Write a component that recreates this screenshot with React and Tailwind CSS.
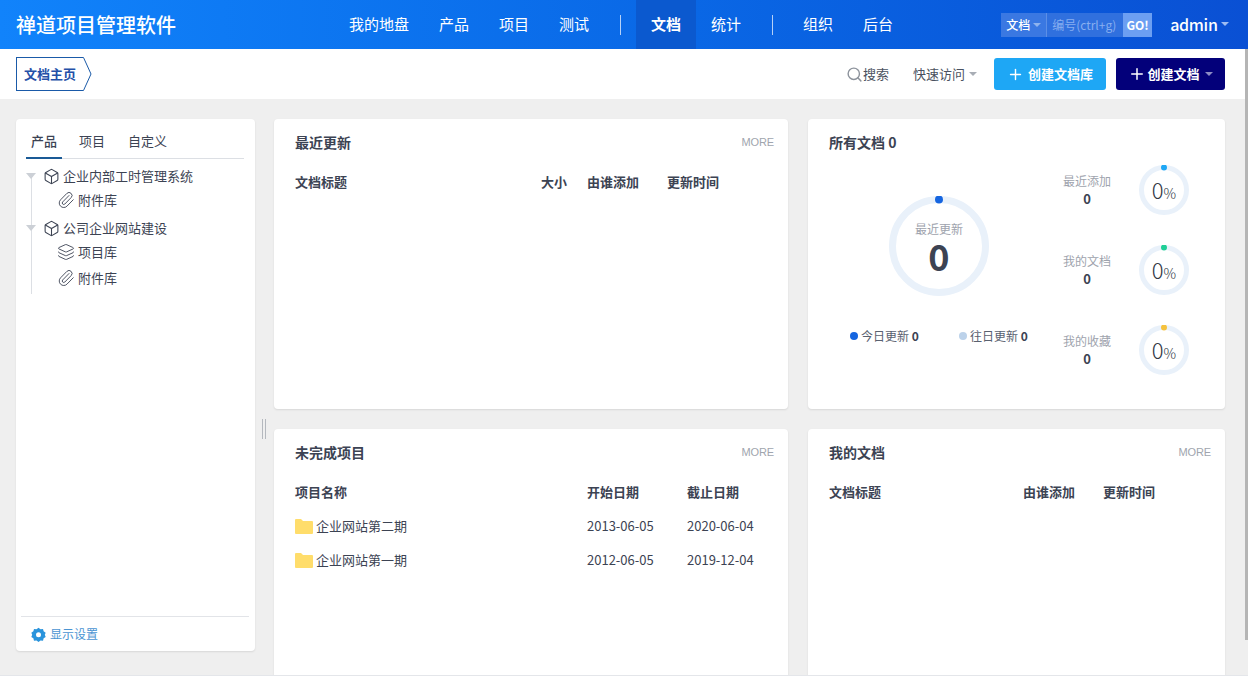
import React from "react";
import { Box, Layers, Paperclip, Plus, Search } from "lucide-react";

const navItems = ["我的地盘", "产品", "项目", "测试", "|", "文档", "统计", "|", "组织", "后台"];

const Caret = ({ className }) => (
  <span className={`inline-block w-0 h-0 border-x-[4px] border-x-transparent border-t-[4px] ${className}`} />
);

const Card = ({ title, more, children, className }) => (
  <div className={`bg-white rounded-[4px] shadow-[0_1px_2px_rgba(0,0,0,0.1)] px-[21px] ${className}`}>
    <div className="flex items-center justify-between h-[46px] -mr-[7px]">
      <span className="text-[14px] font-bold text-[#3c4353]">{title}</span>
      {more && <span className="text-[11px] text-[#a0a5ae] tracking-[-0.1px] font-['Liberation_Sans',sans-serif]">MORE</span>}
    </div>
    {children}
  </div>
);

const HeadRow = ({ cols }) => (
  <div className="flex items-center h-[30px] mt-[2px]">
    {cols.map(([text, w]) => (
      <div key={text} className="text-[13px] font-bold text-[#3c4353]" style={{ width: w }}>
        {text}
      </div>
    ))}
  </div>
);

const Folder = () => (
  <svg width="18" height="15" viewBox="0 0 18 15" className="shrink-0">
    <path d="M1 0h5l2 2h9a1 1 0 0 1 1 1v11a1 1 0 0 1-1 1H1a1 1 0 0 1-1-1V1a1 1 0 0 1 1-1z" fill="#ffdd6b" />
  </svg>
);

const Ring = ({ size, width, dot, dotR, children }) => {
  const r = size / 2 - width / 2;
  return (
    <div className="relative shrink-0" style={{ width: size, height: size }}>
      <svg width={size} height={size} viewBox={`0 0 ${size} ${size}`}>
        <circle cx={size / 2} cy={size / 2} r={r} fill="none" stroke="#e9f1fa" strokeWidth={width} />
        <circle cx={size / 2} cy={width / 2} r={dotR} fill={dot} />
      </svg>
      <div className="absolute inset-0 flex flex-col items-center justify-center">{children}</div>
    </div>
  );
};

const SmallStat = ({ label, dot }) => (
  <div className="flex items-center h-[80px]">
    <div className="w-[76px] flex flex-col items-center">
      <span className="text-[12px] leading-[18px] text-[#9ea3ad]">{label}</span>
      <span className="text-[13px] leading-[18px] font-bold text-[#3c4353]">0</span>
    </div>
    <div className="ml-[14px]">
      <Ring size={50} width={5} dot={dot} dotR={3}>
        <span className="text-[#2f3644] leading-none font-light -mt-[3px]">
          <span className="text-[22px]">0</span>
          <span className="text-[14px]">%</span>
        </span>
      </Ring>
    </div>
  </div>
);

const Gear = () => (
  <svg width="15" height="15" viewBox="0 0 24 24" fill="none" className="shrink-0">
    <path
      d="M12 1l3.200 2.400 4-.3 1 3.800 3.300 2.300-1.400 3.300 1.400 3.300-3.300 2.200-1 3.800-4-.3L12 24l-3.200-2.500-4 .3-1-3.800L.5 15.800l1.400-3.300L.5 9.200l3.300-2.300 1-3.800 4 .3z"
      fill="#2a94dc"
    />
    <circle cx="12" cy="12.500" r="4" fill="white" />
  </svg>
);

const TreeItem = ({ icon: Icon, text, className = "" }) => (
  <div className={`flex items-center h-[26px] pl-[31px] text-[13px] text-[#3c4353] ${className}`}>
    <Icon size={18} strokeWidth={1.2} className="mr-[3px] text-[#3c4353]" />
    {text}
  </div>
);

const TreeHead = ({ text, className = "" }) => (
  <div className={`flex items-center h-[26px] text-[13px] text-[#3c4353] ${className}`}>
    <Caret className="border-x-[5px] border-t-[6px] border-t-[#ccd0d6] mr-[7px]" />
    <Box size={17} strokeWidth={1.5} className="mr-[3px]" />
    {text}
  </div>
);

export default function App() {
  return (
    <div className="relative w-[1248px] h-[682px] overflow-hidden bg-[#efefef] font-['Noto_Sans_CJK_SC','Noto_Sans',sans-serif]">
      <header className="flex items-center h-[49px] bg-gradient-to-r from-[#1183fb] to-[#0a50d4] text-white">
        <div className="w-[334px] pl-[16px] text-[20px] font-medium">禅道项目管理软件</div>
        <nav className="flex h-full">
          {navItems.map((item, i) =>
            item === "|" ? (
              <div key={i} className="w-[32px] flex items-center justify-center">
                <div className="w-px h-[20px] bg-white/70" />
              </div>
            ) : (
              <div
                key={i}
                className={`flex items-center px-[15px] text-[15px] ${item === "文档" ? "bg-[#0b59cf] font-bold" : ""}`}
              >
                {item}
              </div>
            )
          )}
        </nav>
        <div className="ml-[93px] flex h-[24px] text-[12px] leading-[24px]">
          <div className="flex items-center w-[46px] pl-[5px] gap-[3px] bg-[#3a78e2] border-r border-r-[#5c8fe6] font-medium">
            文档
            <Caret className="border-t-[#8fb3ee]" />
          </div>
          <div className="w-[76px] pl-[5px] bg-[#3070de] text-[#87aef0]">编号(ctrl+g)</div>
          <div className="w-[29px] text-center bg-[#6c9ff2] font-bold">GO!</div>
        </div>
        <div className="ml-[18px] -mt-px flex items-center gap-[3px] text-[16px] font-medium tracking-[-0.3px]">
          admin
          <Caret className="border-t-[#9dbcf2]" />
        </div>
      </header>

      <div className="flex items-center h-[50px] bg-white pl-[16px] pr-[23px]">
        <div className="relative flex items-center h-[34px] w-[67px] pl-[7px] border border-r-0 border-[#1a5aa8] text-[13px] font-bold text-[#2450a8]">
          文档主页
          <svg width="9" height="34" viewBox="0 0 9 34" className="absolute left-[66px] -top-px">
            <path d="M0 .5h.5L8 17 .5 33.500H0" fill="white" stroke="#1a5aa8" />
          </svg>
        </div>
        <div className="ml-auto flex items-center text-[13px] text-[#4a5160]">
          <Search size={17} strokeWidth={2} className="text-[#8d939c]" />
          搜索
          <span className="ml-[24px]">快速访问</span>
          <Caret className="ml-[4px] border-t-[#a8adb5]" />
          <button className="ml-[17px] flex items-center justify-center w-[112px] h-[32px] rounded-[3px] bg-[#1ea7f5] text-white text-[13px] font-bold">
            <Plus size={17} strokeWidth={2} className="mr-[4px]" />
            创建文档库
          </button>
          <button className="ml-[10px] flex items-center justify-center w-[109px] h-[32px] rounded-[3px] bg-[#03007a] text-white text-[13px] font-bold">
            <Plus size={18} strokeWidth={2} className="mr-px" />
            创建文档
            <Caret className="ml-[5px] border-t-[#8d8cc4]" />
          </button>
        </div>
      </div>

      <main className="flex h-[576px] overflow-hidden pt-[20px] pl-[16px]">
        <aside className="flex flex-col w-[239px] h-[532px] bg-white rounded-[4px] shadow-[0_1px_2px_rgba(0,0,0,0.1)] pl-[10px] pr-[11px]">
          <div className="flex h-[40px] pt-[8px] border-b border-b-[#dcdfe4] text-[13px] text-[#3c4353]">
            <div className="flex justify-center items-center w-[36px] h-[32px] pb-[2px] border-b-2 border-b-[#1a5a96] font-medium">产品</div>
            <div className="ml-[17px] h-[28px] flex items-center">项目</div>
            <div className="ml-[23px] h-[28px] flex items-center">自定义</div>
          </div>
          <div className="relative mt-[4px]">
            <div className="absolute left-[5px] top-[13px] h-[118px] w-px bg-[#dcdfe4]" />
            <div className="relative">
              <TreeHead text="企业内部工时管理系统" />
              <TreeItem icon={Paperclip} text="附件库" className="-mt-[2px]" />
              <TreeHead text="公司企业网站建设" className="mt-[2px]" />
              <TreeItem icon={Layers} text="项目库" className="-mt-[2px]" />
              <TreeItem icon={Paperclip} text="附件库" />
            </div>
          </div>
          <div className="mt-auto flex items-center h-[35px] -mr-[5px] -ml-[5px] border-t border-t-[#e2e4e8] pl-[10px] text-[12px] text-[#4a94d2]">
            <Gear />
            <span className="ml-[4px]">显示设置</span>
          </div>
        </aside>

        <div className="w-[19px] pt-[300px] pl-[7px]">
          <div className="w-[4px] h-[20px] border-x border-x-[#b4b8be]" />
        </div>

        <div className="grid grid-cols-[514px_417px] grid-rows-[290px_290px] gap-x-[20px] gap-y-[20px]">
          <Card title="最近更新" more>
            <HeadRow cols={[["文档标题", 246], ["大小", 46], ["由谁添加", 80], ["更新时间", 80]]} />
          </Card>

          <Card title="所有文档 0">
            <div className="flex">
              <div className="w-[220px] flex flex-col items-center pt-[31px]">
                <Ring size={100} width={7} dot="#1565e0" dotR={4}>
                  <div className="flex flex-col items-center pb-[3px]">
                    <span className="text-[12px] leading-[16px] text-[#9ea3ad]">最近更新</span>
                    <span className="text-[36px] leading-[28px] mt-[4px] font-bold text-[#3c4353]">0</span>
                  </div>
                </Ring>
                <div className="flex w-[220px] mt-[30px] text-[12px] leading-[20px] text-[#5a6170]">
                  <div className="flex items-center pl-[21px] w-[130px]">
                    <span className="w-[8px] h-[8px] rounded-full bg-[#1565e0] mr-[3px]" />
                    今日更新&nbsp;<b className="text-[#3c4353]">0</b>
                  </div>
                  <div className="flex items-center">
                    <span className="w-[8px] h-[8px] rounded-full bg-[#bcd2ea] mr-[3px]" />
                    往日更新&nbsp;<b className="text-[#3c4353]">0</b>
                  </div>
                </div>
              </div>
              <div className="-mt-[15px]">
                <SmallStat label="最近添加" dot="#1ea7f5" />
                <SmallStat label="我的文档" dot="#1fcf96" />
                <SmallStat label="我的收藏" dot="#f5c23e" />
              </div>
            </div>
          </Card>

          <Card title="未完成项目" more>
            <HeadRow cols={[["项目名称", 292], ["开始日期", 100], ["截止日期", 80]]} />
            <div className="mt-[2px]">
              {[
                ["企业网站第二期", "2013-06-05", "2020-06-04"],
                ["企业网站第一期", "2012-06-05", "2019-12-04"],
              ].map(([name, start, end]) => (
                <div key={name} className="flex items-center h-[34px] text-[13px] text-[#3c4353]">
                  <div className="flex items-center w-[292px] gap-[3px]">
                    <Folder />
                    {name}
                  </div>
                  <div className="w-[100px]">{start}</div>
                  <div>{end}</div>
                </div>
              ))}
            </div>
          </Card>

          <Card title="我的文档" more>
            <HeadRow cols={[["文档标题", 194], ["由谁添加", 80], ["更新时间", 80]]} />
          </Card>
        </div>
      </main>

      <div className="h-[7px] bg-white border-t border-t-[#e4e6ea]" />
      <div className="absolute right-0 top-[49px] w-[3px] h-[591px] bg-[#b5b5b5]" />
    </div>
  );
}
